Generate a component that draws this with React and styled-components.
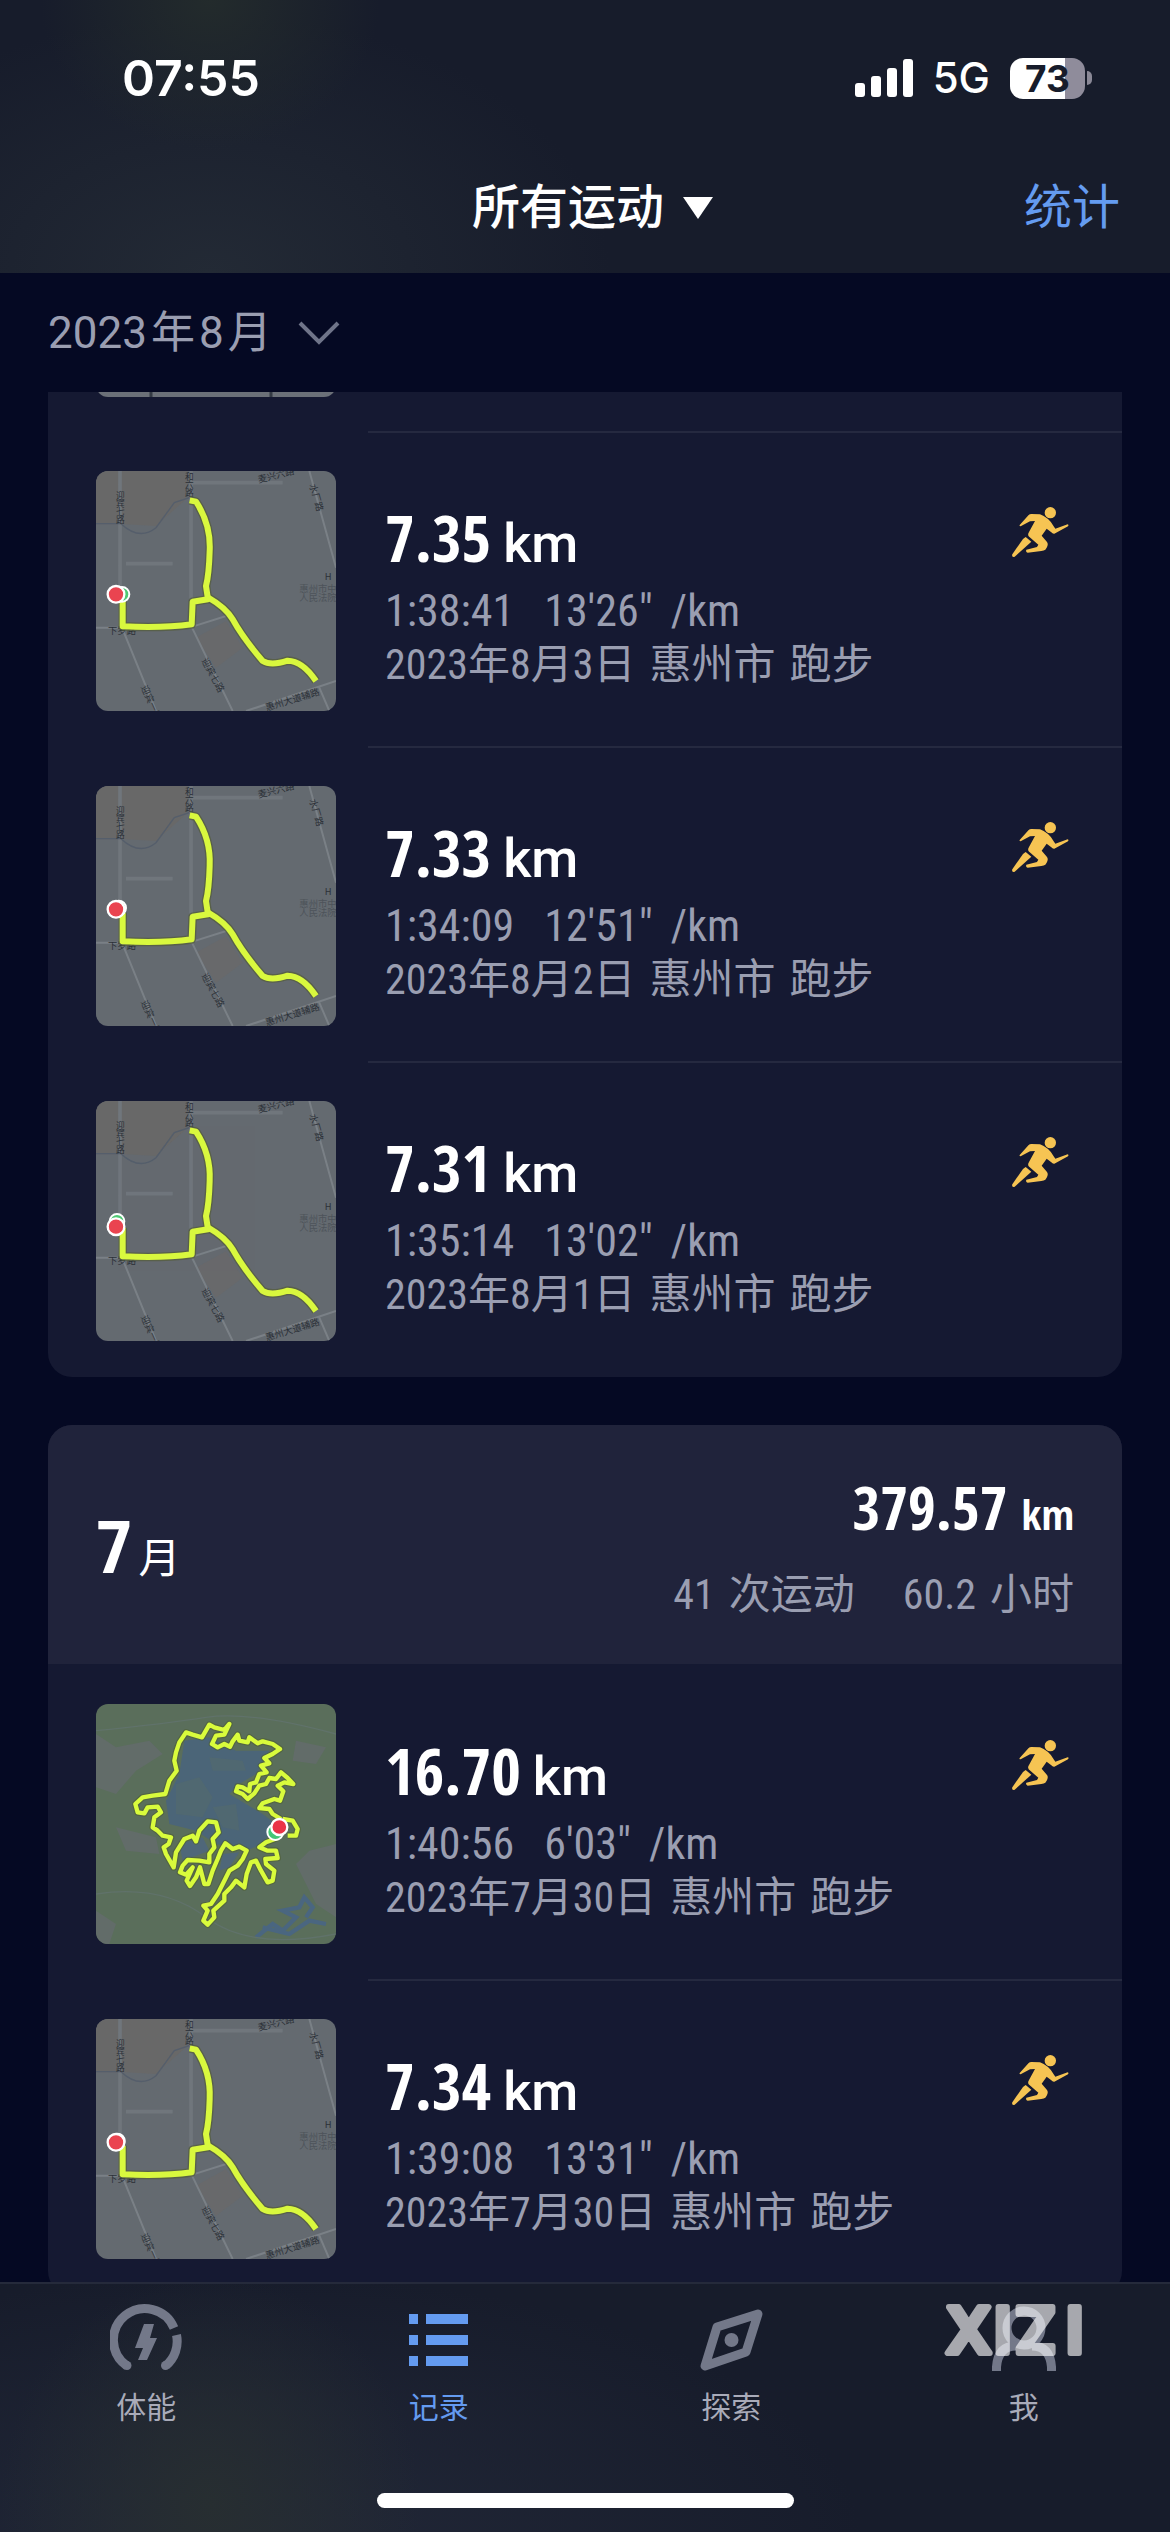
import React from "react";
import styled, { createGlobalStyle } from "styled-components";

const cjk = `"Noto Sans CJK SC", sans-serif`;
const uiFont = `Inter, ${cjk}`;
const textFont = `Roboto, ${cjk}`;
const metaFont = `"Roboto Condensed", ${cjk}`;
const numberFont = `"Open Sans Condensed", "Roboto Condensed", ${cjk}`;

const c = {
  page: "#050923",
  card: "#151932",
  cardHead: "#20233b",
  bar: "#171c2b",
  line: "#252940",
  white: "#ffffff",
  muted: "#9a9eb1",
  dim: "#737889",
  blue: "#649bf0",
  gold: "#f6c453",
};

const GlobalStyle = createGlobalStyle`
  *, *::before, *::after { box-sizing: border-box; }
  body { margin: 0; background: ${c.page}; }
  button { border: 0; padding: 0; background: none; color: inherit; font: inherit; cursor: pointer; }
  a { color: inherit; text-decoration: none; }
  svg { display: block; }
  h2, p { margin: 0; font-weight: inherit; }
`;

const Screen = styled.div`
  display: flex;
  flex-direction: column;
  height: 100vh;
  overflow: hidden;
  background: ${c.page};
  color: ${c.white};
  font-family: ${textFont};
`;

const Header = styled.header`
  flex: none;
  background:
    radial-gradient(ellipse 170px 150px at 210px 0, #232b2c 0%, transparent 100%),
    radial-gradient(ellipse 400px 260px at 210px 273px, #232a35 0%, transparent 100%),
    ${c.bar};
`;

const StatusBar = styled.div`
  display: flex;
  align-items: center;
  justify-content: space-between;
  height: 156px;
  padding: 0 78px 0 122px;
  font-family: ${uiFont};
`;

const Clock = styled.time`
  font-size: 50px;
  font-weight: 600;
  line-height: 60px;
`;

const StatusIcons = styled.div`
  display: flex;
  align-items: center;
  gap: 20px;
`;

const Network = styled.span`
  font-size: 42px;
  font-weight: 500;
  line-height: 48px;
`;

const Battery = styled.div`
  display: flex;
  align-items: center;
  gap: 2px;

  &::after {
    content: "";
    width: 5px;
    height: 14px;
    border-radius: 0 6px 6px 0;
    background: #8a8896;
  }
`;

const BatteryLevel = styled.span`
  width: 75px;
  height: 41px;
  border-radius: 13px;
  background: linear-gradient(90deg, ${c.white} 73%, #8f8c9b 73%);
  color: ${c.bar};
  font-size: 37px;
  font-weight: 700;
  line-height: 41px;
  text-align: center;
`;

const TitleBar = styled.div`
  display: grid;
  grid-template-columns: 1fr auto 1fr;
  align-items: center;
  height: 117px;
  padding: 0 50px 14px;
  font-size: 48px;
  line-height: 60px;
`;

const TitleButton = styled.button`
  grid-column: 2;
  display: flex;
  align-items: center;
  gap: 18px;
  padding-left: 16px;
  font-weight: 500;
`;

const StatsLink = styled.a`
  justify-self: end;
  color: ${c.blue};
`;

const MonthBar = styled.div`
  flex: none;
  display: flex;
  align-items: center;
  height: 119px;
  padding: 0 48px;
`;

const MonthButton = styled.button`
  display: flex;
  align-items: center;
  gap: 26px;
  color: ${c.muted};
  font-size: 44px;
  line-height: 54px;
`;

const MonthText = styled.span`
  display: flex;
  gap: 4px;
`;

const List = styled.main`
  flex: 1;
  min-height: 0;
  display: flex;
  flex-direction: column;
  gap: 48px;
  padding: 0 48px;
  overflow: hidden;
`;

const Card = styled.section`
  flex: none;
  overflow: hidden;
  border-radius: ${(p) => (p.$continued ? "0 0 24px 24px" : "24px")};
  background: ${c.card};
`;

const Peek = styled.div`
  display: flex;
  align-items: flex-end;
  height: 5px;
  margin: 0 48px 34px;
  overflow: hidden;
`;

const MonthHead = styled.div`
  display: flex;
  align-items: flex-start;
  justify-content: space-between;
  height: 239px;
  padding: 46px 48px;
  background: ${c.cardHead};
`;

const MonthName = styled.h2`
  display: flex;
  align-items: baseline;
  gap: 6px;
  padding-top: 36px;
  font-family: ${metaFont};
  font-size: 42px;
  line-height: 84px;
`;

const MonthNumber = styled.span`
  font-size: 72px;
  font-weight: 700;
`;

const Totals = styled.div`
  display: flex;
  flex-direction: column;
  align-items: flex-end;
  gap: 18px;
`;

const TotalDistance = styled.p`
  display: flex;
  align-items: baseline;
  gap: 14px;
  font-family: ${numberFont};
  font-size: 60px;
  font-weight: 700;
  line-height: 72px;
`;

const TotalUnit = styled.span`
  font-size: 42px;
`;

const TotalMeta = styled.div`
  display: flex;
  gap: 48px;
`;

const Row = styled.article`
  display: flex;
  height: 315px;
  padding-left: 48px;

  &:last-child { height: 316px; }
`;

const Thumb = styled.div`
  flex: none;
  width: 240px;
  height: 240px;
  border-radius: 12px;
  overflow: hidden;

  ${Row} & { margin: 40px 32px 35px 0; }
`;

const Body = styled.div`
  flex: 1;
  display: flex;
  justify-content: space-between;
  align-items: flex-start;
  padding: 65px 52px 0 17px;
  border-top: 2px solid ${(p) => (p.$first ? "transparent" : c.line)};
`;

const Distance = styled.p`
  display: flex;
  align-items: baseline;
  gap: 12px;
  font-family: ${numberFont};
  font-size: 64px;
  font-weight: 700;
  line-height: 80px;
`;

const Unit = styled.span`
  font-family: ${textFont};
  font-size: 54px;
  font-weight: 500;
`;

const Meta = styled.p`
  display: flex;
  gap: ${(p) => (p.$wide ? "30px" : "14px")};
  color: ${c.muted};
  font-family: ${metaFont};
  font-size: ${(p) => (p.$wide ? "44px" : "42px")};
  line-height: 54px;
`;

const Pace = styled.span`
  display: flex;
  gap: 18px;
`;

const RunnerIcon = styled.svg`
  flex: none;
  width: 60px;
  height: 54px;
  margin-top: 8px;
  fill: ${c.gold};
`;

const TabBar = styled.footer`
  position: relative;
  flex: none;
  border-top: 2px solid #252a3b;
  background:
    radial-gradient(ellipse 210px 230px at 210px 220px, #272e31 0%, transparent 100%),
    radial-gradient(ellipse 620px 260px at 240px 250px, #222838 0%, transparent 100%),
    ${c.bar};
`;

const Tabs = styled.nav`
  display: grid;
  grid-template-columns: repeat(4, 1fr);
  padding-top: 18px;
`;

const Tab = styled.a`
  display: flex;
  flex-direction: column;
  align-items: center;
  gap: 16px;
  color: ${(p) => (p.$active ? c.blue : "#a9abb9")};
  font-size: 30px;
  line-height: 36px;
`;

const TabIcon = styled.svg`
  width: 72px;
  height: 72px;
  fill: none;
  stroke: ${(p) => (p.$active ? "none" : c.dim)};
  stroke-width: 9;
  color: ${(p) => (p.$active ? c.blue : c.dim)};
`;

const HomeIndicator = styled.div`
  width: 417px;
  max-width: 60%;
  height: 15px;
  margin: 67px auto 24px;
  border-radius: 8px;
  background: ${c.white};
`;

const Watermark = styled.svg`
  position: absolute;
  top: 19px;
  right: 85px;
  width: 141px;
  height: 54px;
  opacity: 0.62;
  pointer-events: none;
  fill: #fff;
  stroke: #fff;
  stroke-width: 6;
  stroke-linejoin: round;
  font: 600 63px Inter, sans-serif;
`;

const MapLabels = styled.g`
  fill: #2b3037;
  font: 28px ${cjk};
`;

function CityMap({ end = [60, 370], start = [78, 370] }) {
  return (
    <svg viewBox="0 0 720 720" width="240" height="240" aria-hidden="true">
      <rect width="720" height="720" fill="#646a70" />
      <path d="M0 0H275V80L180 165L90 160H0Z" fill="#686868" />
      <path d="M300 500L390 450L440 530L360 590Z" fill="#68696b" />
      <path d="M72 0V470M285 0V465M285 35H560M90 278H230" stroke="#70767c" strokeWidth="11" fill="none" />
      <path d="M78 470L180 720M288 470L410 720M280 470L400 432M640 0L720 290M450 720L720 630M670 650L700 720M0 470H80" stroke="#7a8086" strokeWidth="6" fill="none" />
      <path d="M0 158H75Q130 210 180 170L235 95L280 80" stroke="#555e6b" strokeWidth="4" fill="none" />
      <MapLabels>
        <text fontSize="26">
          <tspan x="60" y="84">迎</tspan><tspan x="60" y="108">宾</tspan><tspan x="60" y="132">七</tspan><tspan x="60" y="156">路</tspan>
        </text>
        <text fontSize="26">
          <tspan x="267" y="26">和</tspan><tspan x="267" y="50">六</tspan><tspan x="267" y="74">路</tspan>
        </text>
        <text transform="translate(488 36) rotate(-14)">麦兴六路</text>
        <text transform="translate(640 42) rotate(74)">水厂路</text>
        <text transform="translate(316 568) rotate(62)">迎宾七路</text>
        <text transform="translate(134 648) rotate(66)">迎宾一路</text>
        <text transform="translate(512 720) rotate(-17)">惠州大道辅路</text>
        <text x="36" y="488">下罗路</text>
        <text x="686" y="328">H</text>
        <text x="610" y="362" fill="#4d535a">惠州市中心</text>
        <text x="610" y="390" fill="#4d535a">人民法院</text>
      </MapLabels>
      <g fill="none" strokeLinejoin="round">
        <g stroke="#545d3a" strokeWidth="26" opacity=".7">
          <path d="M281 88L300 92Q345 160 341 240Q339 310 330 345L336 385L290 392L287 460Q200 472 80 466V380" />
          <path d="M334 378Q390 410 410 445Q440 500 500 570Q525 585 575 569Q620 570 660 630" />
        </g>
        <g stroke="#d9f83e" strokeWidth="18">
          <path d="M281 88L300 92Q345 160 341 240Q339 310 330 345L336 385L290 392L287 460Q200 472 80 466V380" />
          <path d="M334 378Q390 410 410 445Q440 500 500 570Q525 585 575 569Q620 570 660 630" />
        </g>
      </g>
      <circle cx={start[0]} cy={start[1]} r="22" fill="#4fc873" stroke="#fff" strokeWidth="6" />
      <circle cx={end[0]} cy={end[1]} r="25" fill="#ea4450" stroke="#fff" strokeWidth="7" />
    </svg>
  );
}

const lakeRoute =
  "M555 345L530 330L520 315L490 312L500 298L535 285L552 290L562 262L545 245L565 235L592 240L575 222L555 205L540 225L520 222L510 240L490 245L475 268L455 285L440 270L420 262L425 247L440 250L460 262L462 240L480 235L490 210L512 205L495 185L520 178L505 162L530 150L552 135L530 120L500 112L485 118L460 100L455 115L430 110L425 92L410 112L402 128L385 120L365 130L348 120L360 95L385 92L400 60L385 78L355 70L340 62L318 100L290 92L270 85L250 115L240 145L235 170L242 200L220 230L208 270L170 275L140 280L118 300L125 325L145 328L155 310L185 308L195 325L175 340L170 370L185 380L200 395L225 400L218 420L203 430L210 450L233 490L240 445L265 405L290 395L300 412L310 380L335 352L360 355L368 385L350 405L355 430L340 450L340 475L310 470L275 468L260 485L252 505L270 512L290 490L272 530L282 546L300 520L312 490L325 540L337 540L350 500L365 465L375 440L388 418L410 435L430 428L452 440L440 465L425 485L400 500L385 530L365 570L345 600L322 605L335 620L322 650L335 662L355 640L352 620L385 590L385 570L405 550L420 530L445 550L452 510L465 475L480 470L495 500L515 535L530 530L535 500L510 480L508 465L545 462L540 440L515 440L490 430L510 415L545 402M560 345L590 350L605 375L600 395L575 395";

function LakeMap() {
  return (
    <svg viewBox="0 0 720 720" width="240" height="240" aria-hidden="true">
      <rect width="720" height="720" fill="#5a6e5b" />
      <path d="M0 90L60 130L160 110L200 150L120 200L60 270L0 250ZM60 370L180 400L190 450L90 440ZM600 110L690 130L660 180L590 170ZM720 420L640 440L600 480L660 600L720 640ZM0 620L60 660L40 720H0Z" fill="#626c69" />
      <path d="M265 110L340 100L420 140L520 140L480 210L430 240L400 270L450 300L500 330L540 360L500 420L450 440L360 420L300 380L220 360L210 290L250 210Z" fill="#4b6578" />
      <path d="M240 240L310 220L350 280L320 340L240 330ZM340 160L440 170L450 200L350 200ZM350 310L420 300L430 380L380 370Z" fill="#506871" />
      <path d="M250 420L320 400L340 440L260 470ZM380 450L430 445L400 490L370 500Z" fill="#4f6779" />
      <path d="M480 700L530 660L560 680L600 640L560 620L610 610L625 580L650 610L630 640M500 670L580 690L640 650L690 660" fill="none" stroke="#4a6680" strokeWidth="13" />
      <path d="M0 570Q200 540 330 640T720 690M0 80Q200 60 330 40T720 90" stroke="#60726a" strokeWidth="4" fill="none" />
      <path d={lakeRoute} fill="none" stroke="#4e5f32" strokeWidth="20" strokeLinejoin="round" opacity=".6" />
      <path d={lakeRoute} fill="none" stroke="#d9fb3c" strokeWidth="13" strokeLinejoin="round" />
      <circle cx="538" cy="384" r="24" fill="#45c777" stroke="#fff" strokeWidth="6" />
      <circle cx="550" cy="369" r="24" fill="#ea3347" stroke="#fff" strokeWidth="7" />
    </svg>
  );
}

function Runner() {
  return (
    <RunnerIcon viewBox="0 0 180 162" role="img" aria-label="跑步">
      <circle cx="121" cy="20" r="17" />
      <path d="M29 57L56 27Q59 24 64 24L90 25Q117 35 132 62L136 68L173 55Q178 56 174 61L133 83Q128 84 124 79L110 68L95 89L111 108Q116 115 110 125L106 131Q102 134 94 135L53 140Q46 137 49 131L81 123L85 116L61 95Q50 89 57 78L75 45L60 46L32 61Q27 61 29 57Z" />
      <path d="M47 93L64 107L14 152Q6 155 6 146L39 99Z" />
    </RunnerIcon>
  );
}

function Activity({ item, first }) {
  return (
    <Row>
      <Thumb>{item.lake ? <LakeMap /> : <CityMap end={item.end} start={item.start} />}</Thumb>
      <Body $first={first}>
        <div>
          <Distance>
            {item.km}
            <Unit>km</Unit>
          </Distance>
          <Meta $wide>
            <span>{item.time}</span>
            <Pace>
              <span>{item.pace}</span>
              <span>/km</span>
            </Pace>
          </Meta>
          <Meta>
            <span>{item.date}</span>
            <span>惠州市</span>
            <span>跑步</span>
          </Meta>
        </div>
        <Runner />
      </Body>
    </Row>
  );
}

const august = [
  { km: "7.35", time: "1:38:41", pace: `13'26"`, date: "2023年8月3日" },
  { km: "7.33", time: "1:34:09", pace: `12'51"`, date: "2023年8月2日", start: [68, 366] },
  { km: "7.31", time: "1:35:14", pace: `13'02"`, date: "2023年8月1日", end: [60, 377], start: [63, 361] },
];

const july = [
  { km: "16.70", time: "1:40:56", pace: `6'03"`, date: "2023年7月30日", lake: true },
  { km: "7.34", time: "1:39:08", pace: `13'31"`, date: "2023年7月30日", start: [64, 366] },
];

export default function App() {
  return (
    <Screen>
      <GlobalStyle />
      <Header>
        <StatusBar>
          <Clock>07:55</Clock>
          <StatusIcons>
            <svg width="58" height="38" viewBox="0 0 58 38" fill="#fff" aria-hidden="true">
              <rect x="0" y="24" width="10" height="14" rx="3" />
              <rect x="16" y="17" width="10" height="21" rx="3" />
              <rect x="32" y="9" width="10" height="29" rx="3" />
              <rect x="48" y="0" width="10" height="38" rx="3" />
            </svg>
            <Network>5G</Network>
            <Battery>
              <BatteryLevel>73</BatteryLevel>
            </Battery>
          </StatusIcons>
        </StatusBar>
        <TitleBar>
          <TitleButton type="button">
            所有运动
            <svg width="32" height="22" viewBox="0 0 32 22" fill="#fff" aria-hidden="true">
              <path d="M1 0H31L16 22Z" />
            </svg>
          </TitleButton>
          <StatsLink href="#stats">统计</StatsLink>
        </TitleBar>
      </Header>

      <MonthBar>
        <MonthButton type="button">
          <MonthText>
            <span>2023</span>
            <span>年</span>
            <span>8</span>
            <span>月</span>
          </MonthText>
          <svg width="42" height="26" viewBox="0 0 42 26" fill="none" stroke="#6f7489" strokeWidth="4" aria-hidden="true">
            <path d="M2 3L21 22L40 3" />
          </svg>
        </MonthButton>
      </MonthBar>

      <List>
        <Card $continued>
          <Peek>
            <Thumb>
              <svg viewBox="0 0 240 240" width="240" height="240" aria-hidden="true">
                <rect width="240" height="240" fill="#6b7078" />
                <path d="M55 232V240M175 232V240" stroke="#343a44" strokeWidth="3" />
              </svg>
            </Thumb>
          </Peek>
          {august.map((item) => (
            <Activity key={item.date} item={item} />
          ))}
        </Card>
        <Card>
          <MonthHead>
            <MonthName>
              <MonthNumber>7</MonthNumber>月
            </MonthName>
            <Totals>
              <TotalDistance>
                379.57
                <TotalUnit>km</TotalUnit>
              </TotalDistance>
              <TotalMeta>
                <Meta>
                  <span>41</span>
                  <span>次运动</span>
                </Meta>
                <Meta>
                  <span>60.2</span>
                  <span>小时</span>
                </Meta>
              </TotalMeta>
            </Totals>
          </MonthHead>
          {july.map((item, i) => (
            <Activity key={item.km} item={item} first={i === 0} />
          ))}
        </Card>
      </List>

      <TabBar>
        <Tabs>
          <Tab href="#fitness">
            <TabIcon viewBox="0 0 72 72" aria-hidden="true">
              <path d="M17 64A31.500 31.500 0 1 1 64 26" />
              <path d="M66.500 33A31.500 31.500 0 0 1 56 63.500" />
              <circle cx="17" cy="63.500" r="4.500" fill="currentColor" stroke="none" />
              <circle cx="55.500" cy="63.500" r="4.500" fill="currentColor" stroke="none" />
              <path d="M34 22H44L40 36H47L37 58H28L33 46H25Z" fill="currentColor" stroke="none" />
            </TabIcon>
            体能
          </Tab>
          <Tab href="#records" $active aria-current="page">
            <TabIcon $active viewBox="0 0 72 72" aria-hidden="true">
              <g fill="currentColor">
                <path d="M6 12h9v10H6zM6 33h9v10H6zM6 54h9v10H6z" />
                <path d="M23 12h42v10H23zM23 33h42v10H23zM23 54h42v10H23z" />
              </g>
            </TabIcon>
            记录
          </Tab>
          <Tab href="#explore">
            <TabIcon viewBox="0 0 72 72" strokeLinejoin="round" aria-hidden="true">
              <path d="M63 12L22 25L10 64L51 50Z" />
              <circle cx="36.500" cy="38" r="7" fill="currentColor" stroke="none" />
            </TabIcon>
            探索
          </Tab>
          <Tab href="#me">
            <TabIcon viewBox="0 0 72 72" aria-hidden="true">
              <circle cx="36" cy="26" r="17" />
              <path d="M8.500 69V65Q10 44 28 44M44 44Q62 44 63.500 65V69" />
            </TabIcon>
            我
          </Tab>
        </Tabs>
        <HomeIndicator />
        <Watermark viewBox="0 0 141 54">
          <text x="2 50 71 122" y="50">XIZI</text>
        </Watermark>
      </TabBar>
    </Screen>
  );
}
